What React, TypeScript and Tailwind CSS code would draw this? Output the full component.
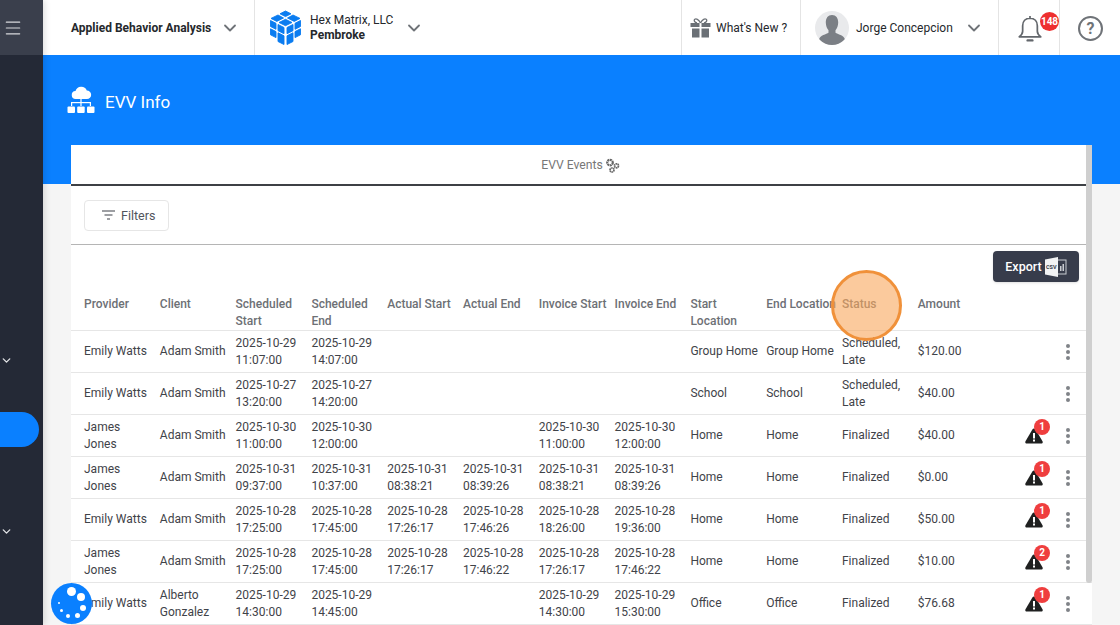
import { ChevronDown, Menu } from "lucide-react";

type Row = {
  provider: string[];
  client: string[];
  schedStart: string[];
  schedEnd: string[];
  actualStart?: string[];
  actualEnd?: string[];
  invoiceStart?: string[];
  invoiceEnd?: string[];
  startLoc: string;
  endLoc: string;
  status: string[];
  amount: string;
  alerts?: number;
};

const emily = ["Emily Watts"];
const james = ["James", "Jones"];
const adam = ["Adam Smith"];
const late = ["Scheduled,", "Late"];
const done = ["Finalized"];

const rows: Row[] = [
  { provider: emily, client: adam, schedStart: ["2025-10-29", "11:07:00"], schedEnd: ["2025-10-29", "14:07:00"], startLoc: "Group Home", endLoc: "Group Home", status: late, amount: "$120.00" },
  { provider: emily, client: adam, schedStart: ["2025-10-27", "13:20:00"], schedEnd: ["2025-10-27", "14:20:00"], startLoc: "School", endLoc: "School", status: late, amount: "$40.00" },
  { provider: james, client: adam, schedStart: ["2025-10-30", "11:00:00"], schedEnd: ["2025-10-30", "12:00:00"], invoiceStart: ["2025-10-30", "11:00:00"], invoiceEnd: ["2025-10-30", "12:00:00"], startLoc: "Home", endLoc: "Home", status: done, amount: "$40.00", alerts: 1 },
  { provider: james, client: adam, schedStart: ["2025-10-31", "09:37:00"], schedEnd: ["2025-10-31", "10:37:00"], actualStart: ["2025-10-31", "08:38:21"], actualEnd: ["2025-10-31", "08:39:26"], invoiceStart: ["2025-10-31", "08:38:21"], invoiceEnd: ["2025-10-31", "08:39:26"], startLoc: "Home", endLoc: "Home", status: done, amount: "$0.00", alerts: 1 },
  { provider: emily, client: adam, schedStart: ["2025-10-28", "17:25:00"], schedEnd: ["2025-10-28", "17:45:00"], actualStart: ["2025-10-28", "17:26:17"], actualEnd: ["2025-10-28", "17:46:26"], invoiceStart: ["2025-10-28", "18:26:00"], invoiceEnd: ["2025-10-28", "19:36:00"], startLoc: "Home", endLoc: "Home", status: done, amount: "$50.00", alerts: 1 },
  { provider: james, client: adam, schedStart: ["2025-10-28", "17:25:00"], schedEnd: ["2025-10-28", "17:45:00"], actualStart: ["2025-10-28", "17:26:17"], actualEnd: ["2025-10-28", "17:46:22"], invoiceStart: ["2025-10-28", "17:26:17"], invoiceEnd: ["2025-10-28", "17:46:22"], startLoc: "Home", endLoc: "Home", status: done, amount: "$10.00", alerts: 2 },
  { provider: emily, client: ["Alberto", "Gonzalez"], schedStart: ["2025-10-29", "14:30:00"], schedEnd: ["2025-10-29", "14:45:00"], invoiceStart: ["2025-10-29", "14:30:00"], invoiceEnd: ["2025-10-29", "15:30:00"], startLoc: "Office", endLoc: "Office", status: done, amount: "$76.68", alerts: 1 },
];

const headers = [["Provider"], ["Client"], ["Scheduled", "Start"], ["Scheduled", "End"], ["Actual Start"], ["Actual End"], ["Invoice Start"], ["Invoice End"], ["Start", "Location"], ["End Location"], ["Status"], ["Amount"]];

const gridCols = "grid grid-cols-[repeat(12,75.8px)_1fr]";

function Logo() {
  return (
    <svg width="33" height="36" viewBox="0 0 33 36" fill="#0a7cf0" stroke="#0a7cf0" strokeWidth="0.900" strokeLinejoin="round">
      <path d="M16.500 1l5.500 2.800-5.500 2.800-5.500-2.800z" />
      <path d="M24 5l7 3.400-5.800 3-6.700-3.400z" />
      <path d="M9 5l5.500 3-6.700 3.400-5.800-3z" />
      <path d="M16.500 9.300l6.500 3.200-6.500 3.200-6.500-3.200z" />
      <path d="M1.500 10.500l5.500 2.800v6l-5.500-2.800z" />
      <path d="M9 14.500l6 3v6.200l-6-3z" />
      <path d="M18 17.500l6-3v6.200l-6 3z" />
      <path d="M26 13.300l5.500-2.800v6l-5.500 2.800z" />
      <path d="M1.500 18.800l5.500 2.800v6l-5.500-2.800z" />
      <path d="M9 22.800l6 3v8.700l-6-3z" />
      <path d="M18 25.800l6-3v8.700l-6 3z" />
      <path d="M26 21.600l5.500-2.800v6l-5.500 2.800z" />
    </svg>
  );
}

function CloudTree() {
  return (
    <svg width="28" height="28" viewBox="0 0 28 28" fill="white">
      <path d="M9 13a4 4 0 0 1-.5-8A6 6 0 0 1 19.800 4.500a4.200 4.200 0 0 1 .2 8.500z" />
      <rect x="13.400" y="13" width="1.200" height="7" />
      <rect x="4" y="16" width="20" height="1.200" />
      <rect x="4" y="16" width="1.200" height="4" />
      <rect x="22.800" y="16" width="1.200" height="4" />
      <rect x="0.500" y="20.500" width="7.500" height="6.500" rx="1" />
      <rect x="10.200" y="20.500" width="7.500" height="6.500" rx="1" />
      <rect x="20" y="20.500" width="7.500" height="6.500" rx="1" />
    </svg>
  );
}

function Gift() {
  return (
    <svg width="21" height="20" viewBox="0 0 21 20" fill="#6b7076">
      <rect x="0.500" y="5" width="9" height="4" />
      <rect x="11.500" y="5" width="9" height="4" />
      <rect x="2" y="10.500" width="7.500" height="9" />
      <rect x="11.500" y="10.500" width="7.500" height="9" />
      <path d="M10.500 5C8.500 1 6 .4 4.800 1.300 3.600 2.300 4.500 4.500 7 5M10.500 5c2-4 4.500-4.600 5.700-3.700 1.200 1 .3 3.200-2.200 3.700" fill="none" stroke="#6b7076" strokeWidth="1.300" />
    </svg>
  );
}

function Avatar() {
  return (
    <div className="h-[34px] w-[34px] shrink-0 overflow-hidden rounded-full bg-[#e9eaec]">
      <svg width="34" height="34" viewBox="0 0 34 34" fill="#7b7f85">
        <path d="M17 4c4 0 6.200 3 6.200 7.500 0 3.200-1.200 6-2.700 7.700v2.600c2 1.400 8.500 2.500 9.500 6.700V34H4v-5.500c1-4.200 7.500-5.300 9.500-6.700v-2.600c-1.500-1.700-2.700-4.500-2.700-7.700C10.800 7 13 4 17 4z" />
      </svg>
    </div>
  );
}

function Bell() {
  return (
    <svg width="26" height="27" viewBox="0 0 24 25" fill="none" stroke="#63676c" strokeWidth="1.600" className="mt-[2px] ml-[1px]">
      <path d="M12 3c-4.200 0-6.800 3-6.800 7v5c0 2.500-1.400 3.800-3.200 5.200h20c-1.800-1.400-3.200-2.700-3.200-5.200v-5c0-4-2.600-7-6.800-7z" strokeLinejoin="round" />
      <path d="M12 1v2" />
      <path d="M9.800 23.500h4.400" strokeWidth="2.200" strokeLinecap="round" />
    </svg>
  );
}

function Gears() {
  return (
    <svg width="15" height="15" viewBox="0 0 15 15" fill="none" stroke="#666">
      <circle cx="5" cy="4.600" r="2.800" strokeWidth="2.200" strokeDasharray="2 0.550" />
      <circle cx="11.500" cy="7.800" r="2" strokeWidth="1.700" strokeDasharray="1.500 0.400" />
      <circle cx="7" cy="12" r="2" strokeWidth="1.700" strokeDasharray="1.500 0.400" />
    </svg>
  );
}

function FilterLines() {
  return (
    <svg width="13" height="10" viewBox="0 0 13 10" stroke="#3c4048" strokeWidth="1.200">
      <path d="M0 1h13M2.500 5h8M5 9h3" />
    </svg>
  );
}

function CsvIcon() {
  return (
    <svg width="22" height="20" viewBox="0 0 22 20">
      <rect x="9" y="3" width="12" height="14" fill="none" stroke="#c9ccd2" strokeWidth="1" />
      <rect x="15" y="9" width="1.500" height="5" fill="#c9ccd2" />
      <rect x="17.500" y="7" width="1.500" height="7" fill="#c9ccd2" />
      <path d="M0 2.500L13 0v20L0 17.500z" fill="#f2f3f4" />
      <text x="1" y="12" fontSize="5.500" fontWeight="700" fill="#333a48" fontFamily="Roboto, sans-serif">CSV</text>
    </svg>
  );
}

function AlertBadge({ count }: { count: number }) {
  return (
    <div className="relative h-[16px] w-[18px]">
      <svg width="18" height="16" viewBox="0 0 18 16" className="block">
        <path d="M9 .5c.7 0 1.200.4 1.600 1l6.900 11.800c.6 1.100 0 2.200-1.300 2.200H1.800C.5 15.500-.1 14.400.5 13.300L7.400 1.500c.4-.6.900-1 1.600-1z" fill="#1f2020" />
        <rect x="8" y="5" width="2" height="5.500" fill="white" />
        <rect x="8" y="11.500" width="2" height="2" fill="white" />
      </svg>
      <span className="absolute -top-[9px] left-[9px] h-[16px] w-[16px] rounded-full bg-[#ef3e3e] text-center text-[10px] leading-[16px] font-bold text-white">{count}</span>
    </div>
  );
}

function Cell({ lines }: { lines?: string[] }) {
  return (
    <div className="self-center pl-[13px] leading-[16.500px] whitespace-nowrap text-[#3f4349]">
      {lines?.map((l, i) => <div key={i}>{l}</div>)}
    </div>
  );
}

export default function App() {
  return (
    <div className="relative flex h-[625px] w-[1120px] overflow-hidden bg-[#f5f5f5] font-['Roboto',sans-serif] text-[12px] leading-[17px]">
      {/* sidebar */}
      <aside className="relative z-10 flex w-[43px] shrink-0 flex-col bg-[#242936] shadow-[2px_0_6px_rgba(0,0,0,0.12)]">
        <div className="flex h-[55px] items-center bg-[#3a3f4c] pl-[2.500px]">
          <Menu size={20} color="#d8d9dc" strokeWidth={1.400} />
        </div>
        <ChevronDown size={13} color="#e2e3e6" strokeWidth={2.500} className="mt-[299px]" />
        <div className="mt-[45px] h-[35px] w-[39px] rounded-r-full bg-[#0a80ff]" />
        <ChevronDown size={13} color="#e2e3e6" strokeWidth={2.500} className="mt-[78px]" />
      </aside>

      <div className="flex min-w-0 flex-1 flex-col">
        {/* top bar */}
        <header className="flex h-[55px] shrink-0 items-center bg-white text-[#25282c]">
          <div className="flex h-full w-[212px] items-center border-r border-[#e4e4e4] pl-[28px]">
            <span className="mt-[2px] text-[12px] font-bold whitespace-nowrap">Applied Behavior Analysis</span>
            <ChevronDown size={20} color="#6f7378" strokeWidth={2.200} className="ml-[9px]" />
          </div>
          <div className="flex h-full w-[426px] items-center pl-[14px]">
            <Logo />
            <div className="mt-[1px] ml-[8px] text-[12px] leading-[15px]">
              <div>Hex Matrix, LLC</div>
              <div className="font-bold">Pembroke</div>
            </div>
            <ChevronDown size={20} color="#6f7378" strokeWidth={2.200} className="ml-[11px]" />
          </div>
          <div className="flex h-full w-[120px] items-center gap-[5px] border-x border-[#e4e4e4] pl-[8px] text-[12px]">
            <Gift />
            <span className="mt-[2px]">What's New ?</span>
          </div>
          <div className="flex h-full w-[198px] items-center border-r border-[#e4e4e4] pl-[14px] text-[12px]">
            <Avatar />
            <span className="mt-[2px] ml-[7px]">Jorge Concepcion</span>
            <ChevronDown size={20} color="#6f7378" strokeWidth={2.200} className="ml-[11px]" />
          </div>
          <div className="relative flex h-full w-[61px] items-center justify-center border-r border-[#e4e4e4]">
            <Bell />
            <span className="absolute top-[12px] left-[41px] h-[19px] w-[19px] rounded-full bg-[#ee2f2f] text-center text-[10px] leading-[19px] font-bold text-white">148</span>
          </div>
          <div className="mt-[2px] flex flex-1 items-center justify-center pl-[1px]">
            <div className="flex h-[25px] w-[25px] items-center justify-center rounded-full border-2 border-[#6f7378] text-[16px] font-bold text-[#6f7378]">?</div>
          </div>
        </header>

        {/* blue band */}
        <div className="relative flex-1 overflow-hidden">
          <div className="flex h-[129px] items-start gap-[10px] bg-[#0a80ff] pt-[31px] pl-[24px]">
            <CloudTree />
            <h1 className="mt-[4px] text-[17px] leading-[24px] text-white">EVV Info</h1>
          </div>

          {/* card */}
          <div className="absolute top-[90px] left-[28px] w-[1021px] bg-white">
            <div className="flex h-[41px] items-center justify-center gap-[2px] border-b-2 border-[#3d4045] pt-[2px] pr-[2px] text-[12.200px] text-[#777]">
              EVV Events <Gears />
            </div>
            <div className="flex h-[59px] items-center border-b border-[#b5b5b5] pl-[13px]">
              <button className="flex h-[31px] w-[85px] items-center gap-[6px] rounded border border-[#e6e6e6] pl-[17px] text-[12.500px] text-[#50545c]">
                <FilterLines /> Filters
              </button>
            </div>
            <div className="flex justify-end pt-[6px] pr-[13px]">
              <div className="flex h-[31px] w-[86px] items-center justify-center gap-[3px] rounded bg-[#373c4b] text-[12.500px] font-medium text-white shadow">
                Export <CsvIcon />
              </div>
            </div>
            <div className={`${gridCols} mt-[14px] h-[35px] border-b border-[#e6e6e6] font-medium text-[#6d7075]`}>
              {headers.map((h, i) => (
                <div key={i} className="pl-[13px] whitespace-nowrap">
                  {h.map((l) => <div key={l}>{l}</div>)}
                </div>
              ))}
            </div>
            {rows.map((r, i) => (
              <div key={i} className={`${gridCols} h-[42px] border-b border-[#e6e6e6]`}>
                <Cell lines={r.provider} />
                <Cell lines={r.client} />
                <Cell lines={r.schedStart} />
                <Cell lines={r.schedEnd} />
                <Cell lines={r.actualStart} />
                <Cell lines={r.actualEnd} />
                <Cell lines={r.invoiceStart} />
                <Cell lines={r.invoiceEnd} />
                <Cell lines={[r.startLoc]} />
                <Cell lines={[r.endLoc]} />
                <Cell lines={r.status} />
                <Cell lines={[r.amount]} />
                <div className="flex items-center justify-end gap-[23px] pr-[22px]">
                  {r.alerts ? <AlertBadge count={r.alerts} /> : null}
                  <div className="flex flex-col gap-[2px]">
                    <span className="h-[4px] w-[4px] rounded-full bg-[#808388]" />
                    <span className="h-[4px] w-[4px] rounded-full bg-[#808388]" />
                    <span className="h-[4px] w-[4px] rounded-full bg-[#808388]" />
                  </div>
                </div>
              </div>
            ))}
            {/* scrollbar */}
            <div className="absolute top-0 right-0 h-[438px] w-[6px] rounded-b-[3px] bg-[#cfcfcf]" />
          </div>
        </div>
      </div>

      {/* click marker */}
      <div className="absolute top-[270px] left-[831px] z-20 h-[71px] w-[71px] rounded-full border-[3px] border-[#f0913a] bg-[#f9a75c]/60" />

      {/* chat launcher */}
      <div className="absolute top-[583px] left-[51px] z-20 h-[41px] w-[41px] rounded-full bg-[#0a80ff]">
        <span className="absolute top-[3.500px] left-[15.500px] h-[9px] w-[9px] rounded-full bg-white" />
        <span className="absolute top-[10px] left-[26px] h-[8px] w-[8px] rounded-full bg-white" />
        <span className="absolute top-[21.700px] left-[28.700px] h-[6px] w-[6px] rounded-full bg-white" />
        <span className="absolute top-[29.500px] left-[23.500px] h-[5px] w-[5px] rounded-full bg-white" />
        <span className="absolute top-[30.700px] left-[15px] h-[4px] w-[4px] rounded-full bg-white" />
        <span className="absolute top-[26.200px] left-[8.800px] h-[3px] w-[3px] rounded-full bg-white" />
        <span className="absolute top-[19px] left-[7px] h-[2px] w-[2px] rounded-full bg-white" />
      </div>
    </div>
  );
}
